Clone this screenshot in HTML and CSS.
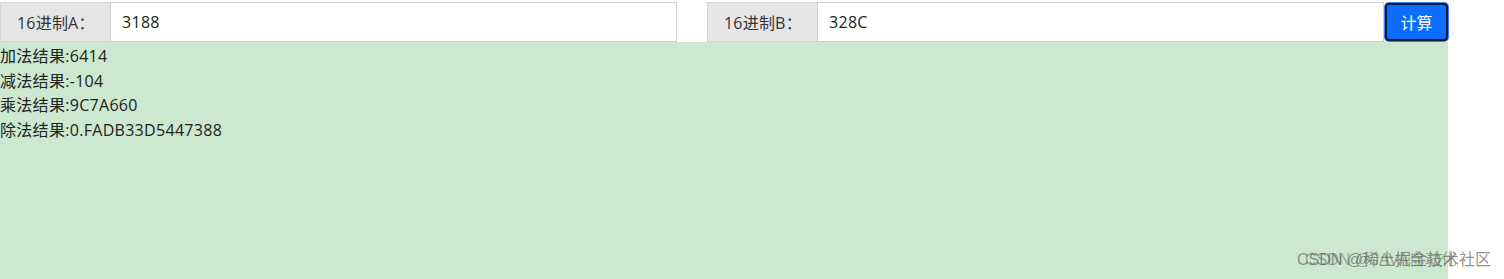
FILE: index.html
```html
<!DOCTYPE html>
<html lang="zh">
<head>
<meta charset="utf-8">
<title>16进制计算</title>
<link rel="stylesheet" href="styles.css">
</head>
<body>
<div class="page">
  <div class="row">
    <div class="group">
      <span class="addon">16进制A：</span>
      <input class="field" type="text" value="3188">
    </div>
    <div class="group">
      <span class="addon">16进制B：</span>
      <input class="field" type="text" value="328C">
    </div>
    <button class="btn" type="button">计算</button>
  </div>
  <div class="result">
    <div class="line">加法结果:6414</div>
    <div class="line">减法结果:-104</div>
    <div class="line">乘法结果:9C7A660</div>
    <div class="line">除法结果:0.FADB33D5447388</div>
  </div>
</div>
<div class="watermark">
  <span class="wm wm1">CSDN @稀土掘金技术社区</span>
  <span class="wm wm2">CSDN @JAVA自动化</span>
</div>
</body>
</html>
```
FILE: styles.css
```css
html, body {
  margin: 0;
  padding: 0;
  background: #ffffff;
  font-family: "Open Sans", "Noto Sans CJK SC", sans-serif;
  color: #222;
}
.page {
  width: 1448px;
  padding-top: 2px;
}
.row {
  display: flex;
  align-items: center;
  height: 40px;
  gap: 30px;
}
.group {
  display: flex;
  flex: 1;
  height: 40px;
}
.row .group:nth-child(2) {
  margin-right: -29px;
}
.addon {
  box-sizing: border-box;
  width: 110px;
  flex: none;
  display: flex;
  align-items: center;
  padding-left: 16px;
  background: #e6e6e6;
  border: 1px solid #d4d4d4;
  border-right: none;
  font-size: 16px;
  letter-spacing: 0.2px;
  color: #333;
}
.field {
  box-sizing: border-box;
  flex: 1;
  min-width: 0;
  height: 40px;
  margin: 0;
  border: 1px solid #cfcfcf;
  padding: 0 11px;
  font-family: "Open Sans", "Noto Sans CJK SC", sans-serif;
  font-size: 16px;
  letter-spacing: 0.3px;
  color: #222;
  background: #fff;
  outline: none;
}
.btn {
  box-sizing: border-box;
  flex: none;
  width: 63px;
  height: 38px;
  margin-left: 0;
  background: #0d6efd;
  color: #fff;
  border: 2px solid #111a33;
  border-radius: 4px;
  box-shadow: 0 0 0 1px #3b7cf0;
  font-family: "Noto Sans CJK SC", sans-serif;
  font-size: 16px;
  padding: 0;
}
.result {
  background: #cce8cf;
  height: 237px;
  padding-top: 2px;
  box-sizing: border-box;
}
.line {
  font-size: 16px;
  letter-spacing: 0.3px;
  line-height: 24.6px;
  color: #222;
}
.watermark {
  position: absolute;
  left: 1297px;
  top: 247px;
  width: 200px;
  height: 28px;
}
.wm {
  position: absolute;
  top: 0;
  white-space: nowrap;
  font-size: 16px;
  line-height: 26px;
  color: rgba(100, 100, 100, 0.7);
  font-family: "Liberation Sans", "Noto Sans CJK SC", sans-serif;
}
.wm1 { left: 0; }
.wm2 { left: 8px; color: rgba(80, 80, 80, 0.45); }
```
